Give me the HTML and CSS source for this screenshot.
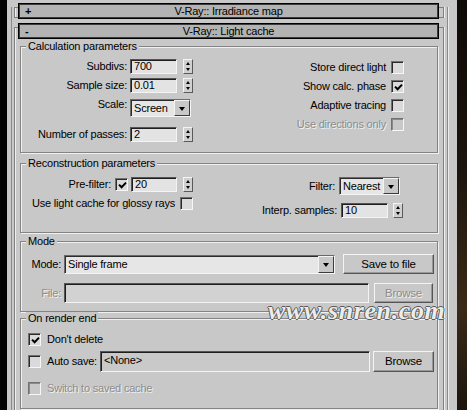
FILE: index.html
```html
<!DOCTYPE html>
<html lang="en">
<head>
    <meta charset="UTF-8">
    <title>V-Ray:: Light cache</title>
    <link rel="stylesheet" href="styles.css">
</head>
<body>
    <div class="screen">
        <div class="edge-left"></div>
        <div class="panel">
            <div class="column">
                <div class="rollout closed">
                    <div class="rollout-head"><span class="sign">+</span>V-Ray:: Irradiance map</div>
                </div>

                <div class="rollout open">
                    <div class="rollout-head"><span class="sign">-</span>V-Ray:: Light cache</div>

                    <!-- Calculation parameters -->
                    <div class="group calc">
                        <span class="group-title">Calculation parameters</span>
                        <div class="col-left">
                            <div class="field">
                                <span class="lbl">Subdivs:</span>
                                <div class="edit">700</div>
                                <div class="spin"><i class="up"></i><i class="down"></i></div>
                            </div>
                            <div class="field sample-row">
                                <span class="lbl">Sample size:</span>
                                <div class="edit">0.01</div>
                                <div class="spin"><i class="up"></i><i class="down"></i></div>
                            </div>
                            <div class="field scale-row">
                                <span class="lbl">Scale:</span>
                                <div class="combo small">Screen<span class="combo-btn"></span></div>
                            </div>
                            <div class="field passes-row">
                                <span class="lbl">Number of passes:</span>
                                <div class="edit">2</div>
                                <div class="spin"><i class="up"></i><i class="down"></i></div>
                            </div>
                        </div>
                        <div class="col-right">
                            <div class="check-row"><span>Store direct light</span><span class="cb"></span></div>
                            <div class="check-row"><span>Show calc. phase</span><span class="cb on"><svg viewBox="0 0 9 9" width="9" height="9"><path d="M1 3.6 L3.6 6.3 L8 1.6" /></svg></span></div>
                            <div class="check-row"><span>Adaptive tracing</span><span class="cb"></span></div>
                            <div class="check-row off"><span>Use directions only</span><span class="cb dis"></span></div>
                        </div>
                    </div>

                    <!-- Reconstruction parameters -->
                    <div class="group recon">
                        <span class="group-title">Reconstruction parameters</span>
                        <div class="col-left">
                            <div class="field">
                                <span class="lbl">Pre-filter:</span>
                                <span class="cb on"><svg viewBox="0 0 9 9" width="9" height="9"><path d="M1 3.6 L3.6 6.3 L8 1.6" /></svg></span>
                                <div class="edit narrow">20</div>
                                <div class="spin"><i class="up"></i><i class="down"></i></div>
                            </div>
                            <div class="check-row glossy-row"><span>Use light cache for glossy rays</span><span class="cb"></span></div>
                        </div>
                        <div class="col-right">
                            <div class="field filter-row">
                                <span class="lbl">Filter:</span>
                                <div class="combo small">Nearest<span class="combo-btn"></span></div>
                            </div>
                            <div class="field interp-row">
                                <span class="lbl">Interp. samples:</span>
                                <div class="edit">10</div>
                                <div class="spin"><i class="up"></i><i class="down"></i></div>
                            </div>
                        </div>
                    </div>

                    <!-- Mode -->
                    <div class="group mode">
                        <span class="group-title">Mode</span>
                        <div class="line">
                            <span class="lbl">Mode:</span>
                            <div class="combo wide">Single frame<span class="combo-btn"></span></div>
                            <div class="btn save">Save to file</div>
                        </div>
                        <div class="line file-row">
                            <span class="lbl off">File:</span>
                            <div class="edit path dis"></div>
                            <div class="btn browse off">Browse</div>
                        </div>
                    </div>

                    <!-- On render end -->
                    <div class="group render-end">
                        <span class="group-title">On render end</span>
                        <div class="opt">
                            <span class="cb on"><svg viewBox="0 0 9 9" width="9" height="9"><path d="M1 3.6 L3.6 6.3 L8 1.6" /></svg></span>
                            <span class="opt-text">Don't delete</span>
                        </div>
                        <div class="opt autosave-row">
                            <span class="cb"></span>
                            <span class="opt-text">Auto save:</span>
                            <div class="edit path ro">&lt;None&gt;</div>
                            <div class="btn browse2">Browse</div>
                        </div>
                        <div class="opt switch-row off">
                            <span class="cb dis"></span>
                            <span class="opt-text">Switch to saved cache</span>
                        </div>
                    </div>
                </div>
            </div>
        </div>
        <div class="edge-right"></div>

        <div class="watermark">www.snren.com</div>
    </div>
</body>
</html>
```

FILE: styles.css
```css
body {
    margin: 0;
    background: #000;
    font-family: "Liberation Sans", Arial, sans-serif;
    font-size: 11px;
    letter-spacing: -0.2px;
    line-height: 13px;
    color: #000;
}

.screen {
    display: flex;
    height: 410px;
    overflow: hidden;
    position: relative;
}

.edge-left {
    width: 7px;
    background: #030303;
}

.edge-right {
    flex: 1;
    background: linear-gradient(180deg, #0e0a06 0%, #1b140c 40%, #3a2a18 75%, #1d150d 100%);
}

.panel {
    width: 450px;
    background: #c8c8c8;
    padding-left: 4px;
    box-sizing: border-box;
}

.column {
    width: 437px;
    height: 100%;
    box-sizing: border-box;
    border-left: 1px solid #8a8a8a;
    border-right: 1px solid #8a8a8a;
    box-shadow: 1px 0 0 #ececec;
}

/* rollouts */
.rollout {
    margin: 0 3px 0 2px;
    border: 1px solid #7e7e7e;
    box-shadow: inset 1px 0 0 #efefef, 1px 0 0 #efefef;
}

.rollout.closed {
    margin-top: 7px;
}

.rollout.open {
    margin-top: 9px;
    border-bottom: none;
    height: 400px;
}

.rollout-head {
    margin: -5px 4px 0 3px;
    height: 16px;
    box-sizing: border-box;
    border: 1px solid #000;
    box-shadow: inset 1px 1px 0 #3c3c3c, inset -1px -1px 0 #3c3c3c;
    background: #b3b3b3;
    display: flex;
    align-items: center;
    justify-content: center;
    position: relative;
    line-height: 12px;
}

.closed .rollout-head {
    margin-bottom: -2px;
}

.sign {
    position: absolute;
    left: 6px;
    top: 1px;
    font-weight: bold;
}

/* group boxes */
.group {
    position: relative;
    margin: 0 5px 0 5px;
    box-sizing: border-box;
    border: 1px solid #848484;
    box-shadow: inset 1px 1px 0 #f0f0f0, 1px 1px 0 #f0f0f0;
}

.group-title {
    position: absolute;
    top: -7px;
    left: 5px;
    padding: 0 2px;
    background: #c8c8c8;
}

.calc {
    margin-top: 7px;
    height: 107px;
    display: flex;
    justify-content: space-between;
}

.recon {
    margin-top: 10px;
    height: 70px;
    display: flex;
    justify-content: space-between;
}

.mode {
    margin-top: 8px;
    height: 71px;
    padding-top: 12px;
}

.render-end {
    margin-top: 6px;
    height: 91px;
    padding: 14px 0 0 7px;
}

.col-left {
    width: 172px;
    display: flex;
    flex-direction: column;
    align-items: flex-end;
}

.col-right {
    display: flex;
    flex-direction: column;
    align-items: flex-end;
}

.calc .col-left {
    padding-top: 12px;
}

.calc .col-right {
    padding-top: 14px;
    gap: 6px;
    margin-right: 33px;
}

.recon .col-left {
    padding-top: 13px;
}

.recon .col-right {
    padding-top: 13px;
    margin-right: 34px;
}

/* rows */
.field {
    display: flex;
    align-items: center;
    height: 15px;
}

.field .lbl {
    margin-right: 3px;
}

.sample-row {
    margin-top: 4px;
}

.scale-row {
    margin-top: 6px;
    height: 18px;
    align-items: flex-start;
    margin-right: 2px;
}

.scale-row .lbl {
    margin-top: -1px;
}

.passes-row {
    margin-top: 10px;
}

.recon .field .lbl {
    margin-right: 4px;
}

.recon .field .cb {
    margin-right: 3px;
}

.glossy-row {
    margin-top: 5px;
}

.filter-row {
    height: 18px;
    margin-right: 3px;
}

.interp-row {
    margin-top: 8px;
}

.interp-row .spin {
    margin-left: 5px;
}

.check-row {
    display: flex;
    align-items: center;
    height: 13px;
}

.check-row .cb {
    margin-left: 5px;
}

.line {
    display: flex;
    align-items: center;
    height: 20px;
}

.line .lbl {
    width: 40px;
    text-align: right;
    margin-right: 3px;
}

.file-row {
    margin-top: 9px;
}

.opt {
    display: flex;
    align-items: center;
    height: 13px;
}

.opt-text {
    margin-left: 6px;
}

.autosave-row {
    margin-top: 5px;
    height: 21px;
}

.autosave-row .opt-text {
    margin-right: 3px;
}

.switch-row {
    margin-top: 10px;
}

/* controls */
.edit {
    width: 47px;
    height: 15px;
    box-sizing: border-box;
    border: 1px solid;
    border-color: #555 #f4f4f4 #f4f4f4 #555;
    box-shadow: inset 1px 1px 0 #1e1e1e;
    background: #e3e3e3;
    padding-left: 3px;
    line-height: 13px;
}

.edit.narrow {
    width: 46px;
}

.edit.path {
    height: 20px;
    line-height: 17px;
}

.mode .edit.path {
    width: 305px;
}

.edit.dis {
    background: #d2d2d2;
}

.edit.ro {
    width: 270px;
    height: 21px;
    background: #c9c9c9;
    margin-left: 0;
}

.spin {
    width: 10px;
    height: 15px;
    margin-left: 6px;
    box-sizing: border-box;
    border: 1px solid;
    border-color: #f4f4f4 #5a5a5a #5a5a5a #f4f4f4;
    background: #d0d0d0;
    display: flex;
    flex-direction: column;
    align-items: center;
    justify-content: space-around;
}

.spin i {
    width: 0;
    height: 0;
    border-left: 2px solid transparent;
    border-right: 2px solid transparent;
}

.spin .up {
    border-bottom: 3px solid #000;
}

.spin .down {
    border-top: 3px solid #000;
}

.combo {
    height: 18px;
    box-sizing: border-box;
    border: 1px solid;
    border-color: #6a6a6a #f4f4f4 #f4f4f4 #6a6a6a;
    box-shadow: inset 1px 1px 0 #2c2c2c;
    background: #e6e6e6;
    display: flex;
    align-items: center;
    padding-left: 3px;
    line-height: 13px;
}

.combo.small {
    width: 61px;
}

.combo.wide {
    width: 271px;
    height: 19px;
    padding-left: 3px;
}

.combo-btn {
    margin-left: auto;
    width: 16px;
    height: 100%;
    box-sizing: border-box;
    border: 1px solid;
    border-color: #f4f4f4 #3c3c3c #3c3c3c #f4f4f4;
    background: #c8c8c8;
    display: flex;
    align-items: center;
    justify-content: center;
    flex: none;
}

.combo-btn::after {
    content: "";
    width: 0;
    height: 0;
    border-left: 3px solid transparent;
    border-right: 3px solid transparent;
    border-top: 4px solid #000;
    margin-top: 1px;
}

.cb {
    width: 13px;
    height: 13px;
    box-sizing: border-box;
    border: 1px solid;
    border-color: #707070 #f6f6f6 #f6f6f6 #707070;
    box-shadow: inset 1px 1px 0 #2a2a2a;
    background: #dadada;
    display: flex;
    align-items: center;
    justify-content: center;
    flex: none;
}

.cb svg {
    margin: 1px 0 0 1px;
}

.cb path {
    fill: none;
    stroke: #000;
    stroke-width: 2;
}

.cb.dis {
    background: #c8c8c8;
    box-shadow: inset 1px 1px 0 #8a8a8a;
}

.btn {
    height: 20px;
    box-sizing: border-box;
    border: 1px solid;
    border-color: #f4f4f4 #555 #555 #f4f4f4;
    box-shadow: inset -1px -1px 0 #989898;
    background: #c8c8c8;
    display: flex;
    align-items: center;
    justify-content: center;
    font-size: 11.5px;
}

.btn.save {
    width: 91px;
    margin-left: 8px;
}

.btn.browse {
    width: 59px;
    margin-left: 5px;
}

.btn.browse2 {
    width: 61px;
    height: 21px;
    margin-left: 3px;
}

.off {
    color: #8c8c8c;
    text-shadow: 1px 1px 0 #f2f2f2;
}

.watermark {
    position: absolute;
    left: 268px;
    top: 303px;
    font-family: "Liberation Serif", serif;
    font-style: italic;
    font-weight: bold;
    font-size: 26px;
    line-height: 16px;
    letter-spacing: 0.6px;
    color: #ececec;
    text-shadow: 1px 0 0 #5a5a5a, -1px 0 0 #5a5a5a, 0 1px 0 #5a5a5a, 0 -1px 0 #5a5a5a;
}
```
